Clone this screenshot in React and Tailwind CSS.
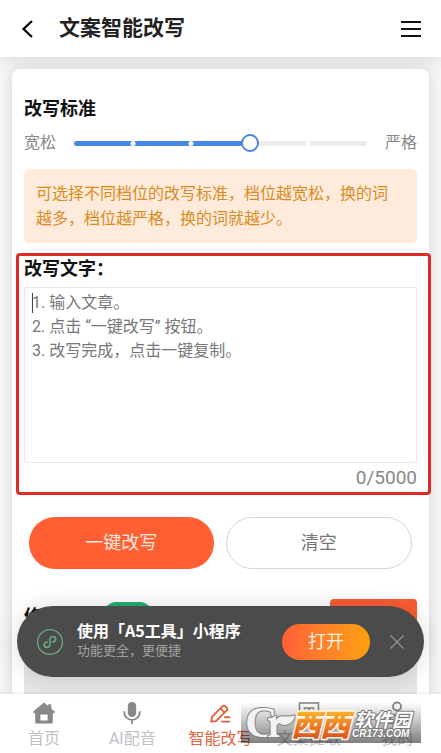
import { useState } from "react";

const SLIDER_MAX = 5;
const STEPS = [1, 2, 4];

function BackIcon() {
  return (
    <svg viewBox="0 0 24 24" className="h-6 w-6" fill="none" stroke="currentColor" strokeWidth="2.2" aria-hidden="true">
      <path d="M16 4 7.500 12 16 20" />
    </svg>
  );
}

function HomeIcon() {
  return (
    <svg viewBox="0 0 24 24" className="h-6 w-6" fill="currentColor" aria-hidden="true">
      <path d="M12 1.5 16.2 5V3.2h3v4.2L23 10.8l-1 1.4h-1.2v9.3c0 .6-.4 1-1 1H4.2c-.6 0-1-.4-1-1v-9.3H2l-1-1.4zM8.400 13.6v6h7.2v-6z" fillRule="evenodd" />
    </svg>
  );
}

function MicIcon() {
  return (
    <svg viewBox="0 0 24 24" className="h-6 w-6" fill="none" stroke="currentColor" strokeWidth="1.8" strokeLinecap="round" aria-hidden="true">
      <rect x="7.800" y="1" width="8.4" height="15" rx="4.2" fill="currentColor" stroke="none" />
      <path d="M4.200 11c0 4.7 3.3 7.8 7.8 7.8s7.8-3.1 7.8-7.8M12 18.8v3.4" />
    </svg>
  );
}

function PenIcon() {
  return (
    <svg viewBox="0 0 24 24" className="h-6 w-6" fill="none" stroke="currentColor" strokeWidth="1.9" strokeLinejoin="round" strokeLinecap="round" aria-hidden="true">
      <path d="M3.200 20.6 4 15.8 14.6 5.2c.7-.7 1.7-.7 2.4 0l1.8 1.8c.7.7.7 1.7 0 2.4L8 20.1zM12.4 7.4l4.2 4.2" />
      <path d="M17 16.2h4.5M14 20.6h7.5" />
    </svg>
  );
}

function ExtractIcon() {
  return (
    <svg viewBox="0 0 24 24" className="h-6 w-6" fill="none" stroke="currentColor" strokeWidth="1.6" aria-hidden="true">
      <rect x="2.500" y="2" width="19" height="19" />
      <path d="M7.500 8.5V7h9v1.5M12 7v9.5M9.8 16.5h4.4" />
    </svg>
  );
}

function UserIcon() {
  return (
    <svg viewBox="0 0 24 24" className="h-6 w-6" fill="none" stroke="currentColor" strokeWidth="1.8" aria-hidden="true">
      <circle cx="12" cy="5.5" r="4" />
      <path d="M4 22c0-5 3-8.5 8-8.5s8 3.5 8 8.5z" />
    </svg>
  );
}

function MiniProgramIcon() {
  return (
    <svg viewBox="0 0 28 28" className="h-7 w-7 shrink-0 text-[#67ac7e]" fill="none" stroke="currentColor" strokeLinecap="round" aria-hidden="true">
      <circle cx="14" cy="14" r="12.4" strokeWidth="1.3" />
      <path d="M16.400 13.9c2 0 3.3-1.2 3.3-2.8 0-1.5-1.3-2.6-2.9-2.6-1.7 0-2.9 1.2-2.9 2.8v5.3c0 1.6-1.2 2.8-2.9 2.8-1.6 0-2.9-1.1-2.9-2.6 0-1.6 1.3-2.8 3.3-2.8" strokeWidth="1.6" />
    </svg>
  );
}

function Watermark() {
  return (
    <div className="pointer-events-none absolute right-5 bottom-2.5 h-[41px] w-[180px] bg-linear-to-b from-black/0 to-black/50">
      <svg viewBox="0 0 180 41" className="h-full w-full overflow-visible">
        <defs>
          <linearGradient id="orange" x1="0" y1="10" x2="0" y2="35" gradientUnits="userSpaceOnUse">
            <stop offset="0" stopColor="#f9b02c" />
            <stop offset="1" stopColor="#e4531d" />
          </linearGradient>
        </defs>
        <g fill="#f3f3f3" stroke="#808080" strokeWidth="2" paintOrder="stroke" strokeLinejoin="round">
          <text x="4" y="35" fontSize="45" fontFamily="Liberation Serif, serif" fontWeight="700">C</text>
          <path d="M27 16.500c3-.3 5.500-1.500 8-3v4.500c2-3 4.500-4 7-3.700 4.500.500 8 .200 12-.800-1.500 6-5.500 9.500-11 9.500-2.500 0-3.500-2-5-1.800-1.800.200-2.500 1.800-2.500 4.300v5c0 2 .800 2.700 3 3v1.500H27V34c2-.200 2.600-1 2.600-3V21c0-2-.600-2.700-2.600-2.800z" />
        </g>
        <g fill="url(#orange)" stroke="#fff6e8" strokeWidth="3" paintOrder="stroke" strokeLinejoin="round" fontSize="30" fontWeight="900" fontStyle="italic" fontFamily="Noto Sans CJK SC, sans-serif">
          <text x="50" y="34">西</text>
          <text x="79" y="34">西</text>
        </g>
        <g fill="#fff" stroke="#777" strokeWidth="2" paintOrder="stroke" strokeLinejoin="round" fontWeight="700" fontStyle="italic">
          <text x="113" y="25" fontSize="19" fontFamily="Noto Sans CJK SC, sans-serif">软件园</text>
          <text x="111" y="35" fontSize="10" fontFamily="Liberation Sans, sans-serif">CR173.COM</text>
        </g>
      </svg>
    </div>
  );
}

const tabs = [
  { label: "首页", Icon: HomeIcon },
  { label: "AI配音", Icon: MicIcon },
  { label: "智能改写", Icon: PenIcon, active: true },
  { label: "文案提取", Icon: ExtractIcon },
  { label: "我的", Icon: UserIcon },
];

export default function App() {
  const [level, setLevel] = useState(3);
  const [text, setText] = useState("");
  const [showToast, setShowToast] = useState(true);

  return (
    <div className="relative flex h-screen flex-col overflow-hidden bg-[#f5f6f8] font-['Roboto','Noto_Sans_CJK_SC',sans-serif] text-base">
      {/* Header */}
      <header className="z-10 flex h-[57px] shrink-0 items-center bg-white px-4 shadow-[0_2px_14px_rgba(0,0,0,0.12)]">
        <button type="button" aria-label="返回" className="flex w-6 text-black">
          <BackIcon />
        </button>
        <h1 className="ml-[19px] flex-1 text-[21px] font-bold text-[#222]">文案智能改写</h1>
        <button type="button" aria-label="菜单" className="mr-1 flex w-5 flex-col gap-[5px]">
          <span className="h-0.5 w-full bg-[#111]" />
          <span className="h-0.5 w-full bg-[#111]" />
          <span className="h-0.5 w-full bg-[#111]" />
        </button>
      </header>

      {/* Content */}
      <main className="min-h-0 flex-1 overflow-hidden p-3">
        <div className="min-h-full rounded-lg bg-white px-3 pt-6 shadow-[0_0_14px_rgba(0,0,0,0.14)]">
          <h2 className="text-lg leading-8 font-bold text-[#111]">改写标准</h2>
          <div className="mt-1.5 flex h-6 items-center text-[#888]">
            <span>宽松</span>
            <div className="relative mx-[18px] h-[5px] flex-1 rounded-full bg-[#ececec]">
              <div className="h-full rounded-full bg-[#4489e5]" style={{ width: `${(level / SLIDER_MAX) * 100}%` }} />
              {STEPS.map((step) => (
                <span
                  key={step}
                  className="absolute top-0 h-[5px] w-[5px] -translate-x-1/2 rounded-full bg-white"
                  style={{ left: `${(step / SLIDER_MAX) * 100}%` }}
                />
              ))}
              <input
                type="range"
                aria-label="改写标准"
                min="0"
                max={SLIDER_MAX}
                value={level}
                onChange={(e) => setLevel(Number(e.target.value))}
                className="absolute top-1/2 -left-[9px] h-[18px] w-[calc(100%+18px)] -translate-y-1/2 appearance-none bg-transparent [&::-webkit-slider-thumb]:h-[18px] [&::-webkit-slider-thumb]:w-[18px] [&::-webkit-slider-thumb]:appearance-none [&::-webkit-slider-thumb]:rounded-full [&::-webkit-slider-thumb]:border-2 [&::-webkit-slider-thumb]:border-solid [&::-webkit-slider-thumb]:border-[#4f87d4] [&::-webkit-slider-thumb]:bg-white"
              />
            </div>
            <span>严格</span>
          </div>

          <p className="mt-3.5 rounded-md bg-[#ffebdb] p-3 leading-[25px] text-[#db8a22]">
            可选择不同档位的改写标准，档位越宽松，换的词
            <br />
            越多，档位越严格，换的词就越少。
          </p>

          <section className="relative mt-2.5">
            <div className="pointer-events-none absolute top-0 -right-3.5 -bottom-0.5 -left-2 rounded-sm border-[3px] border-[#dd2c26]" />
            <label htmlFor="source" className="block text-lg leading-8 font-bold text-[#111]">
              改写文字：
            </label>
            <div className="relative mt-0.5">
              <textarea
                id="source"
                maxLength={5000}
                value={text}
                onChange={(e) => setText(e.target.value)}
                placeholder={"1. 输入文章。\n2. 点击 “一键改写” 按钮。\n3. 改写完成，点击一键复制。"}
                className="block h-44 w-full resize-none rounded-xs border border-[#e8e8e8] bg-white px-[7px] py-[3px] leading-6 text-[#333] placeholder-[#777] outline-none"
              />
              {text === "" && <span className="absolute top-1.5 left-2 h-5 w-px bg-[#444]" />}
            </div>
            <div className="text-right text-[19px] leading-[30px] text-[#888]">{text.length}/5000</div>
          </section>

          <div className="mt-6 flex gap-3 px-[5px] text-lg">
            <button type="button" className="h-[52px] flex-1 rounded-full bg-[#ff5f33] text-[#ffe9df]">
              一键改写
            </button>
            <button
              type="button"
              onClick={() => setText("")}
              className="h-[52px] flex-1 rounded-full border border-[#d6d6d6] bg-white text-[#777]"
            >
              清空
            </button>
          </div>

          <div className="mt-[30px] flex h-9 items-center">
            <h2 className="text-lg font-bold text-[#111]">修改后</h2>
            <span className="ml-[26px] h-[30px] w-12 rounded-xl bg-[#27ad74]" />
            <button type="button" aria-label="复制" className="ml-auto h-full w-[87px] rounded-sm bg-[#fb5c33]" />
          </div>
          <div className="mt-1.5 h-44 bg-[#e5e5e5]" />
        </div>
      </main>

      {/* Mini program toast */}
      {showToast && (
        <div className="absolute inset-x-[17px] bottom-[76px] z-10 flex h-[71px] items-center rounded-full bg-[#4b4b4b] px-[19px] shadow-[0_0_24px_rgba(0,0,0,0.14)]">
          <MiniProgramIcon />
          <div className="ml-[13px] flex-1 pb-1">
            <p className="font-['Noto_Sans_CJK_SC',sans-serif] leading-[22px] font-bold text-white">使用「A5工具」小程序</p>
            <p className="text-[13px] leading-5 text-[#a2a2a2]">功能更全，更便捷</p>
          </div>
          <button type="button" className="h-9 w-[88px] rounded-full bg-linear-to-r from-[#ff5f35] to-[#ffa008] text-lg text-[#fff3e5]">
            打开
          </button>
          <button type="button" aria-label="关闭" onClick={() => setShowToast(false)} className="ml-[19px] text-[#999]">
            <svg viewBox="0 0 16 16" className="h-4 w-4" stroke="currentColor" strokeWidth="1.1">
              <path d="M1.500 1.5l13 13M14.5 1.5l-13 13" />
            </svg>
          </button>
        </div>
      )}

      {/* Bottom tabs */}
      <nav className="relative grid h-[59px] shrink-0 grid-cols-5 bg-white shadow-[0_0_3px_rgba(0,0,0,0.15)]">
        {tabs.map(({ label, Icon, active }) => (
          <a key={label} href="#" className="flex flex-col items-center gap-0.5 pt-[7px] whitespace-nowrap">
            <span className={active ? "text-[#e4603c]" : "text-[#888]"}>
              <Icon />
            </span>
            <span className={active ? "leading-6 text-[#dc6642]" : "leading-6 text-[#bfc1c6]"}>{label}</span>
          </a>
        ))}
        <Watermark />
      </nav>
    </div>
  );
}
